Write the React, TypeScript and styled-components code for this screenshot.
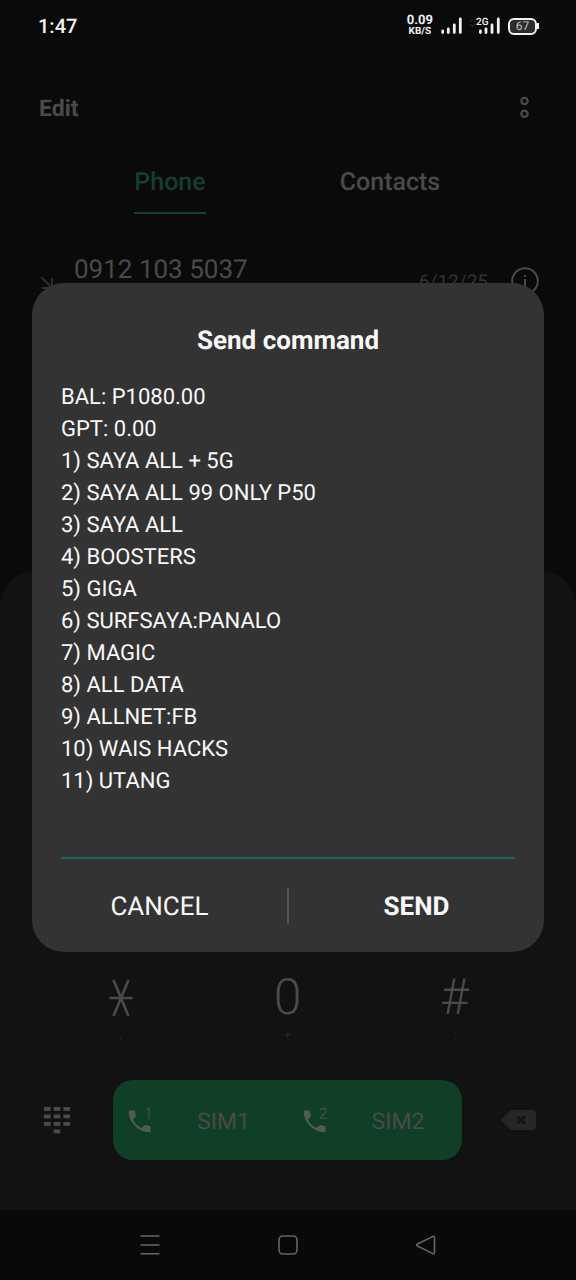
import React from 'react';
import styled, { createGlobalStyle } from 'styled-components';

const GlobalStyle = createGlobalStyle`
  *, *::before, *::after { box-sizing: border-box; }
  html, body { margin: 0; background: #0a0a0a; }
  body {
    font-family: Roboto, "Liberation Sans", sans-serif;
    color: #4a4a4a;
    text-rendering: geometricPrecision;
  }
  button, input { font: inherit; color: inherit; background: none; border: 0; padding: 0; margin: 0; text-rendering: inherit; }
  button { cursor: pointer; }
  svg { display: block; flex: none; }
`;

const Screen = styled.div`
  position: relative;
  display: flex;
  flex-direction: column;
  min-height: 100vh;
`;

const StatusBar = styled.header`
  display: flex;
  align-items: center;
  justify-content: space-between;
  height: 52px;
  padding: 0 37px 0 38px;
  color: #f2f2f2;
`;

const Clock = styled.time`
  font-size: 20px;
  font-weight: 500;
`;

const StatusIcons = styled.div`
  display: flex;
  align-items: center;
  gap: 8px;
`;

const NetSpeed = styled.div`
  display: flex;
  flex-direction: column;
  align-items: center;
  font-size: 10px;
  font-weight: 700;
  line-height: 10px;
`;

const Rate = styled.span`
  font-size: 13px;
  line-height: 12px;
`;

const Battery = styled.div`
  display: flex;
  align-items: center;
`;

const BatteryBody = styled.span`
  width: 29px;
  height: 17px;
  border: 2px solid #f2f2f2;
  border-radius: 6px;
  background: #2c2c2c;
  color: #c4c4c4;
  font-size: 12px;
  line-height: 13px;
  text-align: center;
`;

const BatteryTip = styled.span`
  width: 2px;
  height: 6px;
  background: #f2f2f2;
`;

const TopBar = styled.div`
  display: flex;
  align-items: center;
  justify-content: space-between;
  height: 56px;
  margin-top: 28px;
  padding: 0 45px 0 39px;
`;

const EditButton = styled.button`
  font-size: 23px;
  font-weight: 700;
`;

const Tabs = styled.nav`
  display: grid;
  grid-template-columns: 1fr 1fr;
  justify-items: center;
  margin-top: 24px;
  padding: 0 76px 0 60px;
`;

const Tab = styled.button<{ $active?: boolean }>`
  height: 54px;
  padding-bottom: 8px;
  border-bottom: 2px solid ${(p) => (p.$active ? '#14402e' : 'transparent')};
  color: ${(p) => (p.$active ? '#143f2d' : '#4a4a4a')};
  font-size: 25px;
  font-weight: 500;
`;

const CallRow = styled.div`
  display: flex;
  align-items: flex-start;
  margin-top: 40px;
  padding: 0 37px 0 40px;
`;

const ArrowSlot = styled.span`
  width: 34px;
  padding-top: 22px;
`;

const CallNumber = styled.span`
  flex: 1;
  font-size: 26px;
  line-height: 32px;
`;

const CallDate = styled.time`
  margin-right: 23px;
  padding-top: 16px;
  font-size: 19px;
  line-height: 24px;
  color: #333;
`;

const InfoButton = styled.button`
  padding-top: 13px;
`;

const Sheet = styled.section`
  display: flex;
  flex-direction: column;
  justify-content: flex-end;
  min-height: 640px;
  margin-top: auto;
  padding-bottom: 50px;
  border-radius: 36px 36px 0 0;
  background: #121212;
`;

const KeyRow = styled.div`
  display: grid;
  grid-template-columns: repeat(3, 1fr);
  padding: 0 38px 0 37px;
  margin-bottom: 37px;
`;

const Key = styled.button`
  display: flex;
  flex-direction: column;
  align-items: center;
  font-size: 50px;
  font-weight: 300;
  line-height: 58px;
`;

const KeyFace = styled.span`
  display: flex;
  align-items: center;
  height: 58px;
`;

const KeyHint = styled.span`
  height: 16px;
  font-size: 14px;
  line-height: 16px;
  color: #2b2b2b;
`;

const ActionRow = styled.div`
  display: flex;
  align-items: center;
  justify-content: space-between;
  padding: 0 40px 0 44px;
`;

const SimGroup = styled.div`
  display: flex;
  flex: 1;
  height: 80px;
  margin: 0 39px 0 43px;
  border-radius: 20px;
  background: #0f3f27;
`;

const SimButton = styled.button`
  position: relative;
  display: flex;
  flex: 1;
  align-items: center;
  gap: 43px;
  padding: 2px 0 0 15px;
  font-size: 23px;
`;

const SlotNumber = styled.sup`
  position: absolute;
  left: 31px;
  top: 24px;
  font-size: 16px;
  line-height: 20px;
`;

const NavBar = styled.footer`
  display: flex;
  align-items: center;
  justify-content: center;
  gap: 118px;
  height: 70px;
  background: #090909;
`;

const Overlay = styled.div`
  position: absolute;
  inset: 0;
  display: flex;
  align-items: center;
  justify-content: center;
  padding: 0 32px 45px;
`;

const Dialog = styled.form`
  width: 100%;
  padding: 42px 29px 0;
  border-radius: 32px;
  background: #333;
  color: #f8f8f8;
`;

const DialogTitle = styled.h1`
  margin: 0 0 25px;
  font-size: 26px;
  font-weight: 700;
  line-height: 32px;
  text-align: center;
`;

const Message = styled.div`
  font-size: 22px;
  line-height: 32px;
`;

const Line = styled.p`
  margin: 0;
`;

const ReplyInput = styled.input`
  display: block;
  width: 100%;
  height: 61px;
  border-bottom: 2px solid #17685f;
  font-size: 22px;
  outline: none;
`;

const DialogActions = styled.div`
  display: flex;
  align-items: center;
  height: 93px;
  margin: 0 -29px;
`;

const DialogButton = styled.button<{ $strong?: boolean }>`
  flex: 1;
  height: 100%;
  padding-top: 2px;
  font-size: 26px;
  font-weight: ${(p) => (p.$strong ? 700 : 400)};
`;

const Divider = styled.span`
  width: 2px;
  height: 36px;
  background: #555;
`;

const menuLines = [
  'BAL: P1080.00',
  'GPT: 0.00',
  '1) SAYA ALL + 5G',
  '2) SAYA ALL 99 ONLY P50',
  '3) SAYA ALL',
  '4) BOOSTERS',
  '5) GIGA',
  '6) SURFSAYA:PANALO',
  '7) MAGIC',
  '8) ALL DATA',
  '9) ALLNET:FB',
  '10) WAIS HACKS',
  '11) UTANG',
];

const Signal = () => (
  <svg width="21" height="18" viewBox="0 0 21 18" stroke="#f2f2f2" strokeWidth="2.8" strokeLinecap="round">
    <path d="M1.700 14v1.500M7.300 12v3.500M13.300 8v7.500M19.300 2v13.500" />
  </svg>
);

const DataSignal = () => (
  <svg width="30" height="18" viewBox="0 0 30 18">
    <path d="M.5 4.500l2-2 2 2M.5 7.500l2 2 2-2" fill="none" stroke="#3a3a3a" />
    <path d="M10.400 14v1.500M16 12v3.500M22 8v7.500M28.300 2v13.500" stroke="#f2f2f2" strokeWidth="2.8" strokeLinecap="round" />
    <text x="6" y="8" fill="#f2f2f2" fontSize="10" fontWeight="500" fontFamily="Roboto, sans-serif">2G</text>
  </svg>
);

const Handset = () => (
  <svg width="26" height="26" viewBox="0 0 26 26" fill="#535c54">
    <path d="M1.500 2.500h4.600q.7 0 .8.700.3 2.400 1 4.300.2.700-.3 1.200L4.900 11.400a18.500 18.500 0 0 0 8.600 8.700l2.800-2.700q.5-.5 1.200-.3 2 .7 4.300 1 .8.100.8.900v4.200q0 1-.9 1C10.400 24.200 .8 14 .6 3.500q0-1 .9-1z" />
  </svg>
);

const keypadDots = [
  [0, 0], [1, 0], [2, 0],
  [0, 1], [1, 1], [2, 1],
  [0, 2], [1, 2], [2, 2],
  [1, 3],
];

export default function App() {
  return (
    <Screen>
      <GlobalStyle />
      <StatusBar>
        <Clock>1:47</Clock>
        <StatusIcons>
          <NetSpeed>
            <Rate>0.09</Rate>
            <span>KB/S</span>
          </NetSpeed>
          <Signal />
          <DataSignal />
          <Battery>
            <BatteryBody>67</BatteryBody>
            <BatteryTip />
          </Battery>
        </StatusIcons>
      </StatusBar>

      <TopBar>
        <EditButton type="button">Edit</EditButton>
        <button type="button" aria-label="More options">
          <svg width="12" height="24" viewBox="0 0 12 24" fill="none" stroke="#4a4a4a" strokeWidth="2.2">
            <circle cx="5.500" cy="5" r="3.200" />
            <circle cx="5.500" cy="17.800" r="3.200" />
          </svg>
        </button>
      </TopBar>

      <Tabs>
        <Tab type="button" $active>Phone</Tab>
        <Tab type="button">Contacts</Tab>
      </Tabs>

      <CallRow>
        <ArrowSlot>
          <svg width="14" height="14" viewBox="0 0 14 14" fill="none" stroke="#303030" strokeWidth="1.800">
            <path d="M1 1l11 11M12 2v10H2" />
          </svg>
        </ArrowSlot>
        <CallNumber>0912 103 5037</CallNumber>
        <CallDate>6/12/25</CallDate>
        <InfoButton type="button" aria-label="Call details">
          <svg width="28" height="28" viewBox="0 0 28 28" fill="none" stroke="#4a4a4a" strokeWidth="2">
            <circle cx="14" cy="14" r="12.800" />
            <path d="M14 8v2M14 12v9" />
          </svg>
        </InfoButton>
      </CallRow>

      <Sheet>
        <KeyRow>
          <Key type="button" aria-label="Star">
            <KeyFace>
              <svg width="24" height="38" viewBox="0 0 24 38" fill="none" stroke="#4a4a4a" strokeWidth="2.600">
                <path d="M4.500 1l15 36M19.500 1l-15 36M.500 19h23" />
              </svg>
            </KeyFace>
            <KeyHint>,</KeyHint>
          </Key>
          <Key type="button">
            <KeyFace>0</KeyFace>
            <KeyHint>+</KeyHint>
          </Key>
          <Key type="button">
            <KeyFace>#</KeyFace>
            <KeyHint>;</KeyHint>
          </Key>
        </KeyRow>
        <ActionRow>
          <button type="button" aria-label="Hide keypad">
            <svg width="26" height="28" viewBox="0 0 26 28" fill="#4a4a4a">
              {keypadDots.map(([c, r]) => (
                <rect key={`${c}-${r}`} x={c * 9.700} y={1 + r * 7.500} width="6.600" height="3.800" />
              ))}
            </svg>
          </button>
          <SimGroup>
            <SimButton type="button">
              <Handset />
              <SlotNumber>1</SlotNumber>
              SIM1
            </SimButton>
            <SimButton type="button">
              <Handset />
              <SlotNumber>2</SlotNumber>
              SIM2
            </SimButton>
          </SimGroup>
          <button type="button" aria-label="Delete digit">
            <svg width="35" height="22" viewBox="0 0 35 22">
              <path d="M11 1h20q4 0 4 4v12q0 4-4 4H11q-1.500 0-2.500-1.200L.800 12.200q-1-1.200 0-2.400L8.500 2.200Q9.500 1 11 1z" fill="#262626" />
              <path d="M16.500 7.500l7.500 7M24 7.500l-7.500 7" stroke="#121212" strokeWidth="2.400" />
            </svg>
          </button>
        </ActionRow>
      </Sheet>

      <NavBar>
        <button type="button" aria-label="Recent apps">
          <svg width="20" height="22" viewBox="0 0 20 22" stroke="#666" strokeWidth="1.600">
            <path d="M.5 2h19M.5 11h19M.5 19.800h19" />
          </svg>
        </button>
        <button type="button" aria-label="Home">
          <svg width="20" height="22" viewBox="0 0 20 22" fill="none" stroke="#666" strokeWidth="1.600">
            <rect x="1" y="2" width="18" height="18" rx="4" />
          </svg>
        </button>
        <button type="button" aria-label="Back">
          <svg width="20" height="22" viewBox="0 0 20 22" fill="none" stroke="#666" strokeWidth="1.600" strokeLinejoin="round">
            <path d="M1.500 10l15-7.400q2-.9 2 1.200v14.400q0 2-2 1.200L1.500 12q-1.500-1 0-2z" />
          </svg>
        </button>
      </NavBar>

      <Overlay>
        <Dialog role="dialog" aria-labelledby="dialog-title" onSubmit={(e) => e.preventDefault()}>
          <DialogTitle id="dialog-title">Send command</DialogTitle>
          <Message id="dialog-message">
            {menuLines.map((line) => (
              <Line key={line}>{line}</Line>
            ))}
          </Message>
          <ReplyInput type="text" aria-labelledby="dialog-title" aria-describedby="dialog-message" />
          <DialogActions>
            <DialogButton type="button">CANCEL</DialogButton>
            <Divider />
            <DialogButton type="submit" $strong>SEND</DialogButton>
          </DialogActions>
        </Dialog>
      </Overlay>
    </Screen>
  );
}
